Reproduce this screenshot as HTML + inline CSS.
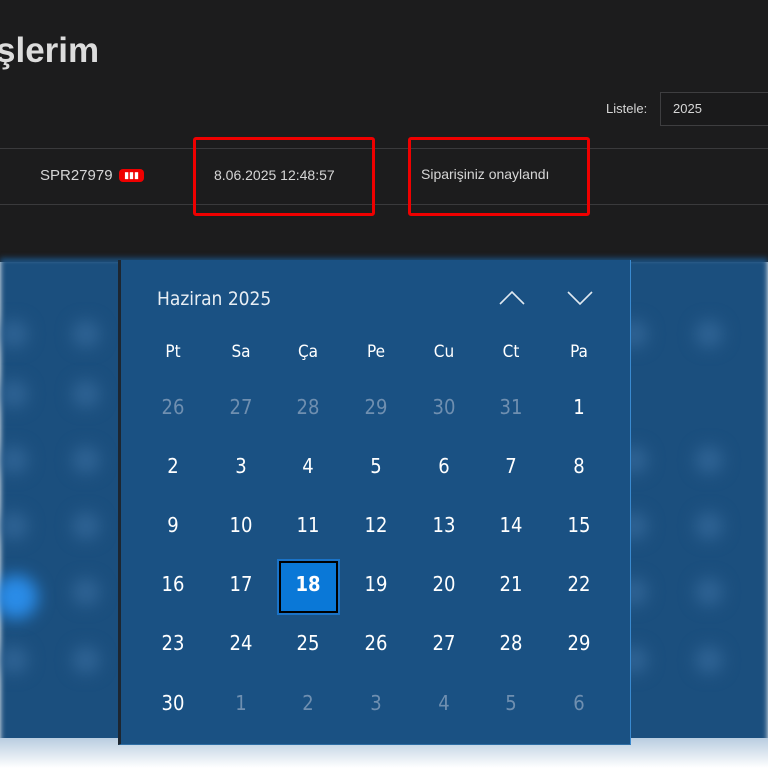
<!DOCTYPE html>
<html><head><meta charset="utf-8"><style>
*{margin:0;padding:0;box-sizing:border-box}
body{width:768px;height:768px;overflow:hidden;background:#fff;font-family:"Liberation Sans",sans-serif;position:relative}
.top{position:absolute;left:0;top:0;width:768px;height:262px;background:#1c1c1d}
.band{position:absolute;left:0;top:258px;width:768px;height:490px;background:#1b4f7e;filter:blur(3px)}
.fade{position:absolute;left:0;top:738px;width:768px;height:30px;background:linear-gradient(#b9cde0,#fff)}
.dot{position:absolute;width:28px;height:28px;border-radius:50%;background:#2f6394;filter:blur(8px)}
h1{position:absolute;left:-4px;top:31px;font-size:35px;font-weight:bold;color:#dcdcdc}
.t{position:absolute;color:#d6d6d6;font-size:15px}
.line{position:absolute;left:0;width:768px;height:1px;background:#3a3a3c}
.red{position:absolute;border:3px solid #e00;border-radius:3px}
.cal{position:absolute;left:118px;top:260px;width:513px;height:485px;background:#1a5183;border-left:3px solid #1d2630;border-right:1px solid #3a8ad0;border-bottom:1px solid #2f6ea4}
.c{position:absolute;width:60px;margin-left:-30px;text-align:center;color:#fff;font-size:20px;font-family:"DejaVu Sans Condensed","Liberation Sans",sans-serif}
.g{color:#6f8fb0}
.dn{font-size:17px}
</style></head><body>
<div class="top"></div>
<div class="band"></div>
<div class="dot" style="left:0;top:320px"></div><div class="dot" style="left:72px;top:320px"></div>
<div class="dot" style="left:0;top:380px"></div><div class="dot" style="left:72px;top:380px"></div>
<div class="dot" style="left:0;top:446px"></div><div class="dot" style="left:72px;top:446px"></div>
<div class="dot" style="left:0;top:512px"></div><div class="dot" style="left:72px;top:512px"></div>
<div class="dot" style="left:-6px;top:575px;width:44px;height:44px;background:#2a8ce8"></div><div class="dot" style="left:72px;top:578px"></div>
<div class="dot" style="left:0;top:646px"></div><div class="dot" style="left:72px;top:646px"></div>
<div class="dot" style="left:620px;top:320px"></div><div class="dot" style="left:695px;top:320px"></div>
<div class="dot" style="left:620px;top:446px"></div><div class="dot" style="left:695px;top:446px"></div>
<div class="dot" style="left:620px;top:512px"></div><div class="dot" style="left:695px;top:512px"></div>
<div class="dot" style="left:620px;top:578px"></div><div class="dot" style="left:695px;top:578px"></div>
<div class="dot" style="left:620px;top:646px"></div><div class="dot" style="left:695px;top:646px"></div>
<div class="fade"></div>
<h1>şlerim</h1>
<div class="t" style="left:606px;top:101px;font-size:13px">Listele:</div>
<div style="position:absolute;left:660px;top:92px;width:120px;height:34px;border:1px solid #3e3e40;background:#1a1a1b"></div>
<div class="t" style="left:673px;top:101px;font-size:13px">2025</div>
<div class="line" style="top:148px"></div>
<div class="line" style="top:204px"></div>
<div class="t" style="left:40px;top:167px">SPR27979</div>
<div style="position:absolute;left:119px;top:169px;width:25px;height:13px;background:#e00;border-radius:4px;color:#fff;font-size:9px;text-align:center;line-height:12px">▮▮▮</div>
<div class="red" style="left:193px;top:137px;width:182px;height:79px"></div>
<div class="t" style="left:214px;top:167px;font-size:14px">8.06.2025 12:48:57</div>
<div class="red" style="left:408px;top:137px;width:182px;height:79px"></div>
<div class="t" style="left:421px;top:166px;font-size:14px">Siparişiniz onaylandı</div>
<div class="cal"></div>
<div class="t" style="left:157px;top:288px;font-size:19px;color:#e8eef4;font-family:'DejaVu Sans Condensed',sans-serif">Haziran 2025</div>
<svg style="position:absolute;left:498px;top:288px" width="100" height="20" fill="none" stroke="#dfe8f0" stroke-width="1.6"><path d="M2 16 L14 4 L26 16"/><path d="M70 4 L82 16 L94 4"/></svg>
<div style="position:absolute;left:277px;top:559px;width:63px;height:56px;background:#1a73c8;padding:2px"><div style="width:100%;height:100%;border:2px solid #000;background:#0a78d7"></div></div>
<div id="g"></div>
<script>
var xs=[173,241,308,376,444,511,579],ys=[353,407,466,525,584,643,703];
var names=["Pt","Sa","Ça","Pe","Cu","Ct","Pa"];
var days=[[26,1],[27,1],[28,1],[29,1],[30,1],[31,1],[1,0]];
for(var d=2;d<=30;d++)days.push([d,0]);for(d=1;d<=6;d++)days.push([d,1]);
var h="";
names.forEach(function(n,i){h+='<div class="c dn" style="left:'+xs[i]+'px;top:'+(ys[0]-11)+'px">'+n+'</div>'});
days.forEach(function(v,i){var r=Math.floor(i/7)+1,c=i%7;h+='<div class="c'+(v[1]?' g':'')+'" style="left:'+xs[c]+'px;top:'+(ys[r]-12)+'px;'+(v[0]==18&&!v[1]?'font-weight:bold':'')+'">'+v[0]+'</div>'});
document.getElementById("g").innerHTML=h;
</script>
</body></html>
